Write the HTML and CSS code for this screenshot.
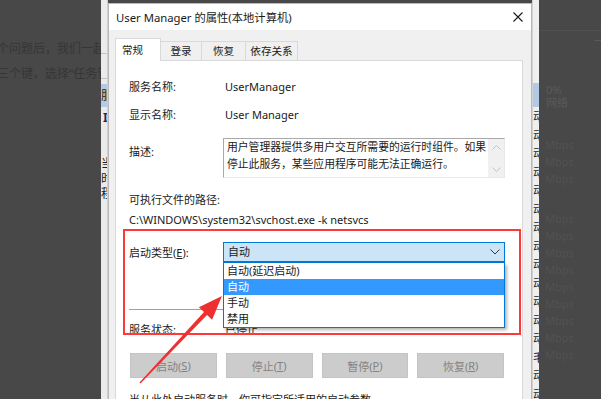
FILE: index.html
```html
<!DOCTYPE html>
<html lang="zh-CN">
<head>
<meta charset="utf-8">
<title>User Manager 的属性</title>
<link rel="stylesheet" href="styles.css">
</head>
<body>
<div class="screen">
  <div class="bg-left">
    <p class="bg-line">个问题后，我们一起来看</p>
    <p class="bg-line">三个键，选择“任务管理器”</p>
  </div>

  <div class="strip strip-left">
    <div class="sl-rule sl-rule1"></div>
    <div class="sl-rule sl-rule2"></div>
    <div class="sl-sel"><span class="clip">服</span></div>
    <div class="sl-mark"><span class="clip">I</span></div>
    <div class="sl-chars"><span class="clip">当</span><span class="clip">时</span><span class="clip">程</span></div>
  </div>

  <div class="dialog">
    <div class="titlebar">
      <span class="title">User Manager 的属性(本地计算机)</span>
      <svg class="close" width="10" height="10" viewBox="0 0 10 10"><path d="M0.5 0.5 L9.5 9.5 M9.5 0.5 L0.5 9.5" stroke="#1a1a1a" stroke-width="1.1" fill="none"/></svg>
    </div>
    <div class="body">
      <div class="tabs">
        <div class="tab tab-active">常规</div>
        <div class="tab tab-w41">登录</div>
        <div class="tab tab-w44">恢复</div>
        <div class="tab tab-w52">依存关系</div>
      </div>
      <div class="panel">
        <div class="row r1"><span class="label">服务名称:</span><span class="value">UserManager</span></div>
        <div class="row r2"><span class="label">显示名称:</span><span class="value">User Manager</span></div>
        <div class="row r3">
          <span class="label label-top">描述:</span>
          <div class="descbox">
            <div class="desctext">用户管理器提供多用户交互所需要的运行时组件。如果<br>停止此服务，某些应用程序可能无法正确运行。</div>
            <div class="scroll">
              <svg width="9" height="5" viewBox="0 0 9 5"><polyline points="0.5,4.5 4.5,0.5 8.5,4.5" fill="none" stroke="#c4c4c4" stroke-width="1"/></svg>
              <svg width="9" height="5" viewBox="0 0 9 5"><polyline points="0.5,0.5 4.5,4.5 8.5,0.5" fill="none" stroke="#c4c4c4" stroke-width="1"/></svg>
            </div>
          </div>
        </div>
        <div class="row r4"><span>可执行文件的路径:</span></div>
        <div class="row r5"><span>C:\WINDOWS\system32\svchost.exe -k netsvcs</span></div>
        <div class="row r6">
          <span class="label">启动类型(<u>E</u>):</span>
          <div class="combo">
            <span class="combo-text">自动</span>
            <svg class="chev" width="10" height="6" viewBox="0 0 10 6"><polyline points="0.5,0.5 5,5 9.5,0.5" fill="none" stroke="#3a3a3a" stroke-width="1"/></svg>
            <ul class="droplist">
              <li>自动(延迟启动)</li>
              <li class="hl">自动</li>
              <li>手动</li>
              <li>禁用</li>
            </ul>
          </div>
        </div>
        <div class="sep"></div>
        <div class="row r7"><span class="label">服务状态:</span><span class="value">已停止</span></div>
        <div class="buttons">
          <div class="btn">启动(<u>S</u>)</div>
          <div class="btn">停止(<u>T</u>)</div>
          <div class="btn">暂停(<u>P</u>)</div>
          <div class="btn">恢复(<u>R</u>)</div>
        </div>
        <div class="row r8"><span>当从此处启动服务时，你可指定所适用的启动参数。</span></div>
        <div class="redbox"></div>
      </div>
    </div>
  </div>

  <div class="strip strip-right">
    <div class="sr-sel"></div>
    <div class="sr-chars">
      <span class="clip">动</span><span class="clip">动</span><span class="clip">动</span><span class="clip">动</span><span class="clip">动</span><span class="clip">动</span><span class="clip">动</span><span class="clip">动</span>
      <span class="clip">动</span><span class="clip">动</span><span class="clip">动</span><span class="clip">动</span><span class="clip">动</span><span class="clip">毛</span><span class="clip">动</span><span class="clip">动</span>
    </div>
  </div>

  <div class="bg-right">
    <div class="br-rule"></div>
    <div class="br-min">—</div>
    <div class="br-head"><span>0%</span><span>网络</span></div>
    <div class="br-col">
      <span>Mbps</span><span>Mbps</span><span>Mbps</span><span class="gap"></span>
      <span>Mbps</span><span>Mbps</span><span>Mbps</span><span>Mbps</span><span>Mbps</span>
      <span>Mbps</span><span>Mbps</span><span>Mbps</span><span>Mbps</span>
    </div>
  </div>

  <svg class="arrow" width="601" height="399" viewBox="0 0 601 399">
    <polygon points="222,296 212.1,319.7 207,314.9 140.5,383.5 139.5,382.5 204,312.1 198.9,307.3" fill="#ee3030"/>
  </svg>
</div>
</body>
</html>
```

FILE: styles.css
```css
* { box-sizing: border-box; }
html, body { margin: 0; padding: 0; }
body {
  font-family: "Noto Sans", "Noto Sans CJK SC", sans-serif;
  font-size: 11px;
  color: #1a1a1a;
  background: #484848;
}
.screen {
  position: relative;
  display: flex;
  width: 601px;
  height: 399px;
  overflow: hidden;
  background: #484848;
}
.clip {
  display: block;
  width: 7px;
  overflow: hidden;
  white-space: nowrap;
}

/* dimmed background page */
.bg-left {
  width: 101px;
  flex: none;
  overflow: hidden;
  padding-top: 36px;
}
.bg-line {
  margin: 0 0 0 -3px;
  white-space: nowrap;
  font-size: 12px;
  line-height: 25px;
  height: 25px;
  color: #363636;
}

.strip {
  flex: none;
  width: 7px;
  overflow: hidden;
  background: #ebebeb;
}
.strip-left { border-right: 1px solid #cfcfcf; }
.sl-rule { height: 1px; background: #c4c4c4; }
.sl-rule1 { margin-top: 53px; }
.sl-rule2 { margin-top: 24px; }
.sl-sel {
  margin-top: 5px;
  height: 23px;
  background: #b3cae6;
  line-height: 23px;
  font-size: 12px;
  color: #222;
}
.sl-mark {
  margin-top: 3px;
  height: 16px;
  line-height: 16px;
  font-size: 12px;
  font-weight: bold;
  color: #2a2a55;
  padding-left: 2px;
}
.sl-chars {
  margin-top: 30px;
  display: flex;
  flex-direction: column;
}
.sl-chars span { height: 15px; line-height: 15px; font-size: 12px; color: #222; }

/* dialog */
.dialog {
  flex: none;
  width: 424px;
  margin-top: 3px;
  height: 400px;
  background: #f0f0f0;
  border: 1px solid #b9b9b9;
  border-bottom: none;
  display: flex;
  flex-direction: column;
}
.titlebar {
  height: 26px;
  flex: none;
  background: #ffffff;
  display: flex;
  align-items: center;
  justify-content: space-between;
  padding: 0 8px 0 7px;
}
.title { font-size: 11.3px; color: #1a1a1a; }
.close { display: block; }

.body {
  padding: 8px 8px 0 6px;
  flex: 1;
  display: flex;
  flex-direction: column;
}
.tabs {
  display: flex;
  align-items: flex-end;
  height: 22px;
  position: relative;
  z-index: 2;
}
.tab {
  height: 19px;
  line-height: 18px;
  text-align: center;
  background: #f0f0f0;
  border: 1px solid #d9d9d9;
  border-left: none;
  border-bottom: none;
  color: #1a1a1a;
  font-size: 10.6px;
}
.tab-active {
  width: 46px;
  height: 23px;
  line-height: 22px;
  background: #ffffff;
  border-left: 1px solid #d9d9d9;
  margin-bottom: -1px;
  text-align: left;
  padding-left: 6px;
}
.tab-w41 { width: 41px; }
.tab-w44 { width: 44px; }
.tab-w52 { width: 52px; }

.panel {
  position: relative;
  flex: 1;
  background: #ffffff;
  border: 1px solid #d9d9d9;
  border-bottom: none;
  padding: 18px 17px 0 13px;
}
.row {
  display: flex;
  align-items: center;
  height: 16px;
  line-height: 16px;
  white-space: nowrap;
}
.label { width: 96px; flex: none; }
.r2 { margin-top: 12px; }
.r3 { margin-top: 15px; height: 40px; align-items: flex-start; }
.label-top { margin-top: 6px; }
.descbox {
  flex: 1;
  margin-left: -2px;
  height: 40px;
  display: flex;
  border-top: 1px solid #a9a9a9;
  border-left: 1px solid #a9a9a9;
  border-right: 1px solid #e8e8e8;
  border-bottom: 1px solid #e8e8e8;
}
.desctext {
  flex: 1;
  padding: 0 0 0 3px;
  line-height: 16.5px;
  white-space: nowrap;
  overflow: hidden;
  font-size: 10.8px;
}
.scroll {
  width: 16px;
  flex: none;
  background: #f0f0f0;
  display: flex;
  flex-direction: column;
  align-items: center;
  justify-content: space-between;
  padding: 6px 0 5px;
}
.scroll svg { display: block; }
.r4 { margin-top: 14px; }
.r5 { margin-top: 4px; }
.r6 { margin-top: 14px; height: 21px; }
.combo {
  position: relative;
  flex: 1;
  margin-left: -2px;
  height: 21px;
  background: #cce4f7;
  border: 1px solid #0078d7;
  border-bottom-width: 2px;
  display: flex;
  align-items: center;
  justify-content: space-between;
  padding: 0 4px 0 4px;
}
.chev { display: block; }
.droplist {
  position: absolute;
  left: -1px;
  right: -1px;
  top: calc(100% + 2px);
  margin: 0;
  padding: 0;
  list-style: none;
  background: #ffffff;
  border: 1px solid #0078d7;
  border-top: none;
  box-shadow: 2px 2px 3px rgba(0, 0, 0, 0.3);
  z-index: 3;
}
.droplist li {
  height: 16px;
  line-height: 16px;
  padding-left: 3px;
}
.droplist li.hl {
  background: #3399ff;
  color: #ffffff;
}
.sep {
  margin-top: 46px;
  height: 1px;
  background: #a0a0a0;
}
.r7 { margin-top: 12px; }
.buttons {
  margin: 15px 1px 0 1px;
  display: flex;
  gap: 9px;
  height: 25px;
}
.btn {
  flex: 1;
  background: #cccccc;
  border: 1px solid #c4c4c4;
  color: #838383;
  display: flex;
  align-items: center;
  justify-content: center;
}
.r8 { margin-top: 14px; }
.redbox {
  position: absolute;
  left: 7px;
  top: 168px;
  width: 398px;
  height: 106px;
  border: 2px solid #ff3838;
  z-index: 4;
  pointer-events: none;
}

/* right side */
.strip-right {
  background: #efefef;
  border-left: 1px solid #d2d2d2;
}
.sr-sel {
  margin-top: 83px;
  height: 24px;
  background: #b3cae6;
}
.sr-chars {
  display: flex;
  flex-direction: column;
  margin-top: 1px;
}
.sr-chars span {
  height: 18.5px;
  line-height: 18.5px;
  font-size: 12px;
  color: #222;
}
.bg-right {
  flex: 1;
  overflow: hidden;
  position: relative;
}
.br-rule { margin-top: 30px; height: 1px; background: #525252; }
.br-min {
  margin: 1px 0 0 55px;
  height: 16px;
  line-height: 16px;
  color: #5a5a5a;
  font-size: 12px;
}
.br-head {
  margin: 35px 0 0 7px;
  display: flex;
  flex-direction: column;
  color: #5a5a5a;
  font-size: 11px;
  line-height: 13px;
}
.br-col {
  margin: 27px 0 0 6px;
  display: flex;
  flex-direction: column;
  color: #525252;
  font-size: 11px;
}
.br-col span { height: 17px; line-height: 17px; }
.br-col span.gap { height: 23px; }

.arrow {
  position: absolute;
  left: 0;
  top: 0;
  z-index: 10;
  pointer-events: none;
}
```
